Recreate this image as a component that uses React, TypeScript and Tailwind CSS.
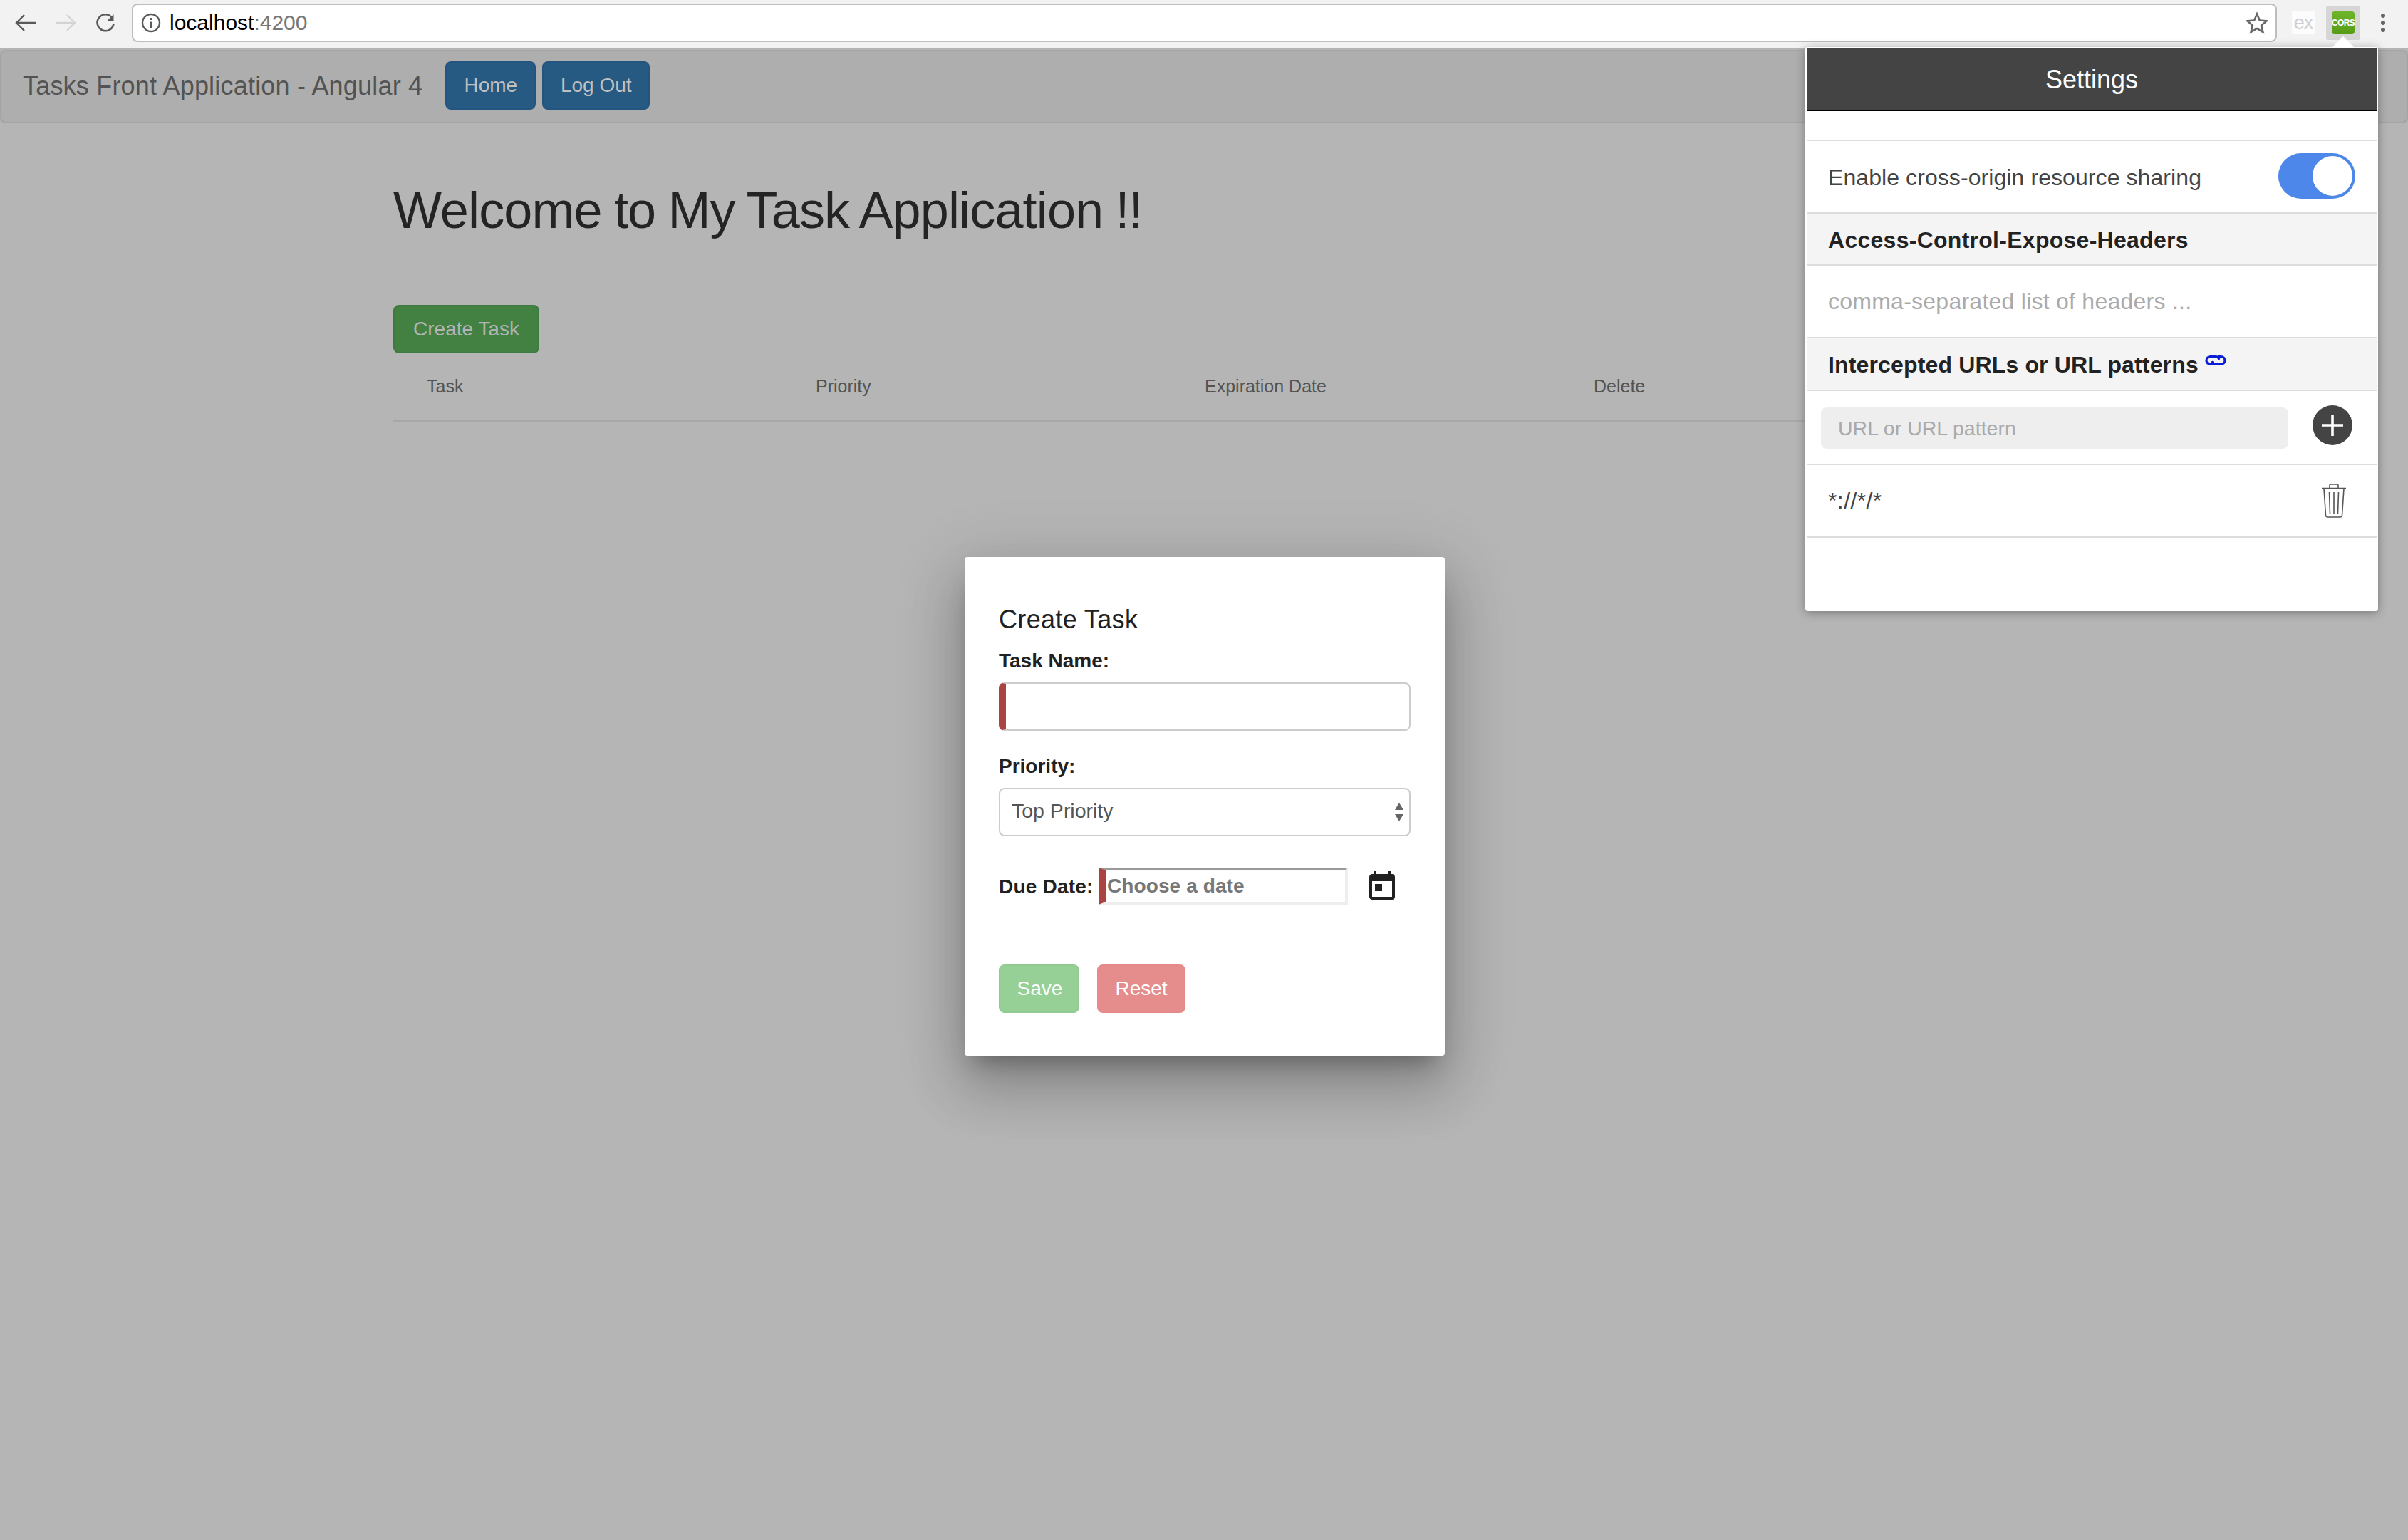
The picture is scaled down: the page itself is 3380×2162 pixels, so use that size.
import React from "react";

function Toolbar() {
  return (
    <div className="h-[70px] bg-[#f2f2f2] border-b-2 border-[#b4b4b4] flex items-center pb-[5px] relative">
      <svg width="32" height="28" viewBox="0 0 32 28" className="ml-[20px]" fill="none" stroke="#5a5a5a" strokeWidth="2.4">
        <path d="M30 14H4M14 3L3 14l11 11" />
      </svg>
      <svg width="32" height="28" viewBox="0 0 32 28" className="ml-[24px]" fill="none" stroke="#d4d4d4" strokeWidth="2.4">
        <path d="M2 14h26M18 3l11 11-11 11" />
      </svg>
      <svg width="30" height="30" viewBox="0 0 30 30" className="ml-[25px]" fill="none" stroke="#5a5a5a" strokeWidth="2.6">
        <path d="M24 7.5A11.5 11.5 0 1 0 26.5 16" />
        <path d="M26.5 3v9h-9z" fill="#5a5a5a" stroke="none" />
      </svg>
      <div className="ml-[22px] w-[3011px] h-[54px] bg-white border-2 border-[#bdbdbd] rounded-[8px] flex items-center pl-[11px] pr-[10px]">
        <svg width="28" height="28" viewBox="0 0 28 28" fill="none" stroke="#5a5a5a" strokeWidth="2.4">
          <circle cx="14" cy="14" r="12" />
          <path d="M14 12.5V21M14 7v3" />
        </svg>
        <span className="ml-[12px] text-[30px] leading-[40px] text-black">
          localhost<span className="text-[#777]">:4200</span>
        </span>
        <svg width="32" height="32" viewBox="0 0 32 32" className="ml-auto" fill="none" stroke="#666" strokeWidth="2.6" strokeLinejoin="miter">
          <path d="M16 3.5l3.8 9 9.7.8-7.4 6.3 2.3 9.4L16 23.9 7.6 29l2.3-9.4-7.4-6.3 9.7-.8z" />
        </svg>
      </div>
      <div className="ml-[21px] w-[32px] h-[32px] bg-[#fcfcfc] flex items-center justify-center text-[27px] leading-[30px] text-[#ccd0d4] tracking-[-1px]">
        ex
      </div>
      <div className="ml-[16px] w-[48px] h-[48px] bg-[#d6d6d6] rounded-[3px] flex items-center justify-center">
        <div className="w-[32px] h-[32px] rounded-[4px] bg-gradient-to-b from-[#6fb52a] to-[#559c14] flex items-center justify-center text-[12px] font-bold text-white tracking-[-0.6px] leading-none">
          CORS
        </div>
      </div>
      <div className="ml-[29px] flex flex-col gap-[4px]">
        <div className="w-[6px] h-[6px] rounded-full bg-[#666]" />
        <div className="w-[6px] h-[6px] rounded-full bg-[#666]" />
        <div className="w-[6px] h-[6px] rounded-full bg-[#666]" />
      </div>
    </div>
  );
}

function Navbar() {
  return (
    <div className="h-[103px] bg-[#aeaeae] border-2 border-[#a4a4a4] rounded-[8px] flex pl-[30px]">
      <div className="self-center text-[36px] leading-[50px] text-[#535353] tracking-[0.2px] mb-[2px]">
        Tasks Front Application - Angular 4
      </div>
      <div className="ml-[32px] mt-[14px] flex gap-[9px]">
        <div className="w-[127px] h-[68px] rounded-[8px] bg-[#265a82] border-2 border-[#245580] text-[#c0c0c0] text-[28px] flex items-center justify-center">
          Home
        </div>
        <div className="w-[151px] h-[68px] rounded-[8px] bg-[#265a82] border-2 border-[#245580] text-[#c0c0c0] text-[28px] flex items-center justify-center">
          Log Out
        </div>
      </div>
    </div>
  );
}

function Main() {
  return (
    <div className="pl-[552px]">
      <h1 className="mt-[82px] text-[72px] leading-[80px] text-[#242424] font-normal tracking-[-0.85px] [word-spacing:-2px]">
        Welcome to My Task Application !!
      </h1>
      <div className="mt-[93px] w-[205px] h-[68px] rounded-[8px] bg-[#428142] border-2 border-[#3d7a3d] text-[#b3b3b3] text-[28px] flex items-center justify-center">
        Create Task
      </div>
      <div className="h-[96px] w-[2184px] border-b-2 border-[#a8a8a8] grid grid-cols-4 items-center text-[25px] text-[#535353]">
        <div className="pl-[47px]">Task</div>
        <div className="pl-[47px]">Priority</div>
        <div className="pl-[47px]">Expiration Date</div>
        <div className="pl-[47px]">Delete</div>
      </div>
    </div>
  );
}

function Dialog() {
  return (
    <div className="absolute left-[1354px] top-[782px] w-[674px] h-[700px] bg-white rounded-[4px] pl-[48px] pr-[48px] pt-[66px] shadow-[0_22px_30px_-14px_rgba(0,0,0,0.3),0_48px_76px_6px_rgba(0,0,0,0.16),0_18px_92px_16px_rgba(0,0,0,0.12)]">
      <div className="text-[36px] leading-[44px] text-[#212121] tracking-[0.35px]">Create Task</div>
      <label className="block mt-[16px] text-[28px] leading-[40px] font-bold text-[#212121]">Task Name:</label>
      <input className="block mt-[10px] w-[578px] h-[68px] border-2 border-l-[10px] border-[#ccc] border-l-[#a94442] rounded-[8px] outline-none bg-white" />
      <label className="block mt-[30px] text-[28px] leading-[40px] font-bold text-[#212121]">Priority:</label>
      <div className="relative mt-[10px] w-[578px]">
        <select className="block w-full h-[68px] border-2 border-[#ccc] rounded-[8px] appearance-none bg-white pl-[16px] text-[28.5px] text-[#555] outline-none pb-[3px]">
          <option>Top Priority</option>
        </select>
        <svg width="14" height="26" viewBox="0 0 14 26" className="absolute right-[9px] top-[21px]" fill="#666">
          <path d="M7 0l6 10H1zM7 26l-6-10h12z" />
        </svg>
      </div>
      <div className="mt-[44px] h-[52px] flex items-center">
        <label className="text-[28px] font-bold text-[#212121] w-[140px] whitespace-nowrap mt-[2px] tracking-[0.2px]">Due Date:</label>
        <input
          placeholder="Choose a date"
          className="w-[350px] h-[52px] border-t-4 border-b-4 border-r-4 border-l-[10px] border-t-[#999] border-r-[#eee] border-b-[#eee] border-l-[#a94442] pl-[2px] text-[28px] tracking-[0.1px] font-bold outline-none placeholder:text-[#777] placeholder:opacity-100"
        />
        <svg width="48" height="48" viewBox="0 0 24 24" className="ml-[24px] mt-[2px]" fill="#212121">
          <path d="M19 3h-1V1h-2v2H8V1H6v2H5c-1.11 0-1.99.9-1.99 2L3 19c0 1.1.89 2 2 2h14c1.1 0 2-.9 2-2V5c0-1.1-.9-2-2-2zm0 16H5V8h14v11zM7 10h5v5H7z" />
        </svg>
      </div>
      <div className="mt-[84px] flex gap-[25px]">
        <div className="w-[113px] h-[68px] rounded-[8px] bg-[#96d096] border-2 border-[#90cc90] text-white text-[28px] flex items-center justify-center pl-[2px]">
          Save
        </div>
        <div className="w-[124px] h-[68px] rounded-[8px] bg-[#e58d8c] border-2 border-[#e58a89] text-white text-[28px] flex items-center justify-center">
          Reset
        </div>
      </div>
    </div>
  );
}

function Popup() {
  return (
    <div className="absolute left-[2534px] top-[66px] w-[804px] h-[792px] bg-white rounded-[4px] p-[2px] shadow-[0_2px_14px_rgba(0,0,0,0.35)]">
      <div className="absolute left-[740px] top-[-15px] w-0 h-0 border-l-[15px] border-r-[15px] border-b-[15px] border-l-transparent border-r-transparent border-b-white" />
      <div className="h-[88px] bg-[#444] border-b-2 border-black flex items-center justify-center text-[36px] text-white pt-[2px]">
        Settings
      </div>
      <div className="h-[42px] border-b-2 border-[#ddd]" />
      <div className="h-[102px] border-b-2 border-[#ddd] flex items-center pl-[30px] pr-[30px] justify-between">
        <span className="text-[32px] text-[#444] tracking-[0.08px] mt-[2px]">Enable cross-origin resource sharing</span>
        <div className="w-[108px] h-[64px] rounded-full bg-[#4d87e9] flex items-center justify-end pr-[4px] mb-[2px]">
          <div className="w-[56px] h-[56px] rounded-full bg-white" />
        </div>
      </div>
      <div className="h-[73px] bg-[#f4f4f4] border-b-2 border-[#ddd] flex items-center pl-[30px] pt-[2px] text-[32px] font-bold text-[#222] tracking-[0.27px]">
        Access-Control-Expose-Headers
      </div>
      <div className="h-[102px] border-b-2 border-[#ddd] flex items-center pl-[30px]">
        <input
          placeholder="comma-separated list of headers ..."
          className="w-[700px] text-[32px] tracking-[0.25px] outline-none placeholder:text-[#aaa] placeholder:opacity-100"
        />
      </div>
      <div className="h-[74px] bg-[#f4f4f4] border-b-2 border-[#ddd] flex items-center pl-[30px] pt-[2px] text-[32px] font-bold text-[#222] tracking-[0.15px]">
        Intercepted URLs or URL patterns
        <svg width="30" height="18" viewBox="0 0 30 18" className="ml-[9px] mb-[12px]" fill="none" stroke="#0a1fd6" strokeWidth="3.2" strokeLinecap="round">
          <path d="M11 14.5H7.5a5.5 5.5 0 0 1 0-11h7.5a5.5 5.5 0 0 1 4.5 3" />
          <path d="M19 3.5h3.5a5.5 5.5 0 0 1 0 11H15a5.5 5.5 0 0 1-4.5-3" />
        </svg>
      </div>
      <div className="h-[104px] border-b-2 border-[#ddd] flex items-center pl-[20px]">
        <input
          placeholder="URL or URL pattern"
          className="w-[656px] h-[58px] mt-[2px] bg-[#eee] rounded-[8px] pl-[24px] text-[28.5px] outline-none placeholder:text-[#aaa] placeholder:opacity-100"
        />
        <svg width="56" height="56" viewBox="0 0 56 56" className="ml-[34px] mb-[6px]">
          <circle cx="28" cy="28" r="28" fill="#444" />
          <path d="M28 13v30M13 28h30" stroke="#fff" strokeWidth="3.6" />
        </svg>
      </div>
      <div className="h-[102px] border-b-2 border-[#ddd] flex items-center pl-[30px] pr-[42px] justify-between">
        <span className="text-[32px] text-[#444] tracking-[0.4px]">*://*/*</span>
        <svg width="36" height="48" viewBox="0 0 36 48" fill="none" stroke="#555" strokeWidth="1.6">
          <path d="M1 6.5h34M12 6V2.5A1.5 1.5 0 0 1 13.5 1h9A1.5 1.5 0 0 1 24 2.5V6" />
          <path d="M4 7l2.5 37.5a2.5 2.5 0 0 0 2.5 2.5h18a2.5 2.5 0 0 0 2.5-2.5L32 7" />
          <path d="M11.5 12l1 30M18 12v30M24.5 12l-1 30" />
        </svg>
      </div>
    </div>
  );
}

export default function App() {
  return (
    <div className="relative w-[3380px] h-[2162px] overflow-hidden bg-[#b5b5b5] font-['Liberation_Sans',Arial,sans-serif]">
      <Toolbar />
      <Navbar />
      <Main />
      <Dialog />
      <Popup />
    </div>
  );
}
